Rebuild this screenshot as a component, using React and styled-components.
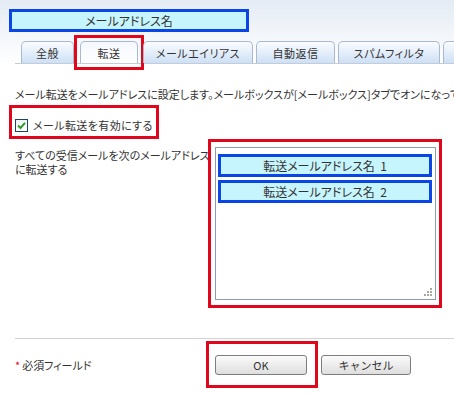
import React from "react";
import styled, { createGlobalStyle } from "styled-components";

const RED = "#e0061c";
const BLUE = "#0a45e6";
const CYAN = "#c7f5fd";

const GlobalStyle = createGlobalStyle`
  html, body {
    margin: 0;
    padding: 0;
    background: #fff;
  }
  body {
    font-family: "Noto Sans CJK JP", "Noto Sans", sans-serif;
    font-size: 11px;
    color: #333;
    font-feature-settings: "palt";
  }
`;

const Page = styled.div`
  width: 454px;
  height: 397px;
  overflow: hidden;
  background: #fff;
`;

const Header = styled.div`
  padding-top: 9px;
  background: linear-gradient(#e4ebf4, #ffffff);
`;

const NameBox = styled.div`
  margin-left: 9px;
  width: 240px;
  height: 23px;
  box-sizing: border-box;
  border: 3px solid ${BLUE};
  background: ${CYAN};
  display: flex;
  align-items: center;
  justify-content: center;
  font-size: 12px;
`;

const TabStrip = styled.div`
  display: flex;
  align-items: flex-end;
  gap: 3px;
  margin: 3px 0 0 15px;
  padding-left: 6px;
  border-bottom: 1px solid #c3ccd8;
`;

const Tab = styled.div`
  flex-shrink: 0;
  width: ${(p) => p.$w}px;
  height: 22px;
  box-sizing: border-box;
  border: 1px solid #a9b9cf;
  border-bottom: none;
  border-radius: 5px 5px 0 0;
  background: ${(p) =>
    p.$active ? "linear-gradient(#f4f8fc, #ffffff)" : "linear-gradient(#fafcff, #cde0f5)"};
  display: flex;
  align-items: center;
  justify-content: center;
  white-space: nowrap;
  letter-spacing: 0.5px;
`;

const RedFrame = styled.div`
  flex-shrink: 0;
  border: 3px solid ${RED};
  padding: ${(p) => p.$pad};
  margin: ${(p) => p.$margin || 0};
`;

const Content = styled.div`
  padding-left: 15px;
`;

const Description = styled.div`
  margin-top: 22px;
  line-height: 16px;
  white-space: nowrap;
`;

const CheckFrame = styled(RedFrame)`
  width: fit-content;
  display: flex;
  align-items: center;
  gap: 5px;
  letter-spacing: 0.4px;
`;

const CheckBox = styled.span`
  width: 13px;
  height: 13px;
  box-sizing: border-box;
  border: 1px solid #1f4466;
  background: linear-gradient(#eef2f5, #ffffff);
  display: flex;
  align-items: center;
  justify-content: center;
`;

const ForwardRow = styled.div`
  display: flex;
  align-items: flex-start;
`;

const ForwardLabel = styled.div`
  width: 193px;
  padding-top: 9px;
  line-height: 14px;
  white-space: nowrap;
`;

const AddressList = styled.div`
  position: relative;
  width: 221px;
  height: 153px;
  box-sizing: border-box;
  border: 1px solid #8c9db3;
  padding: 6px 3px 0 2px;
  display: flex;
  flex-direction: column;
  gap: 3px;
`;

const AddressItem = styled.div`
  height: 23px;
  box-sizing: border-box;
  border: 3px solid ${BLUE};
  background: ${CYAN};
  display: flex;
  align-items: center;
  justify-content: center;
  font-size: 12px;
  white-space: pre;
`;

const Grip = styled.svg`
  position: absolute;
  right: 3px;
  bottom: 3px;
`;

const Footer = styled.div`
  margin: 30px 0 0 15px;
  padding-top: 2px;
  border-top: 1px solid #d2d2d2;
  display: flex;
  align-items: center;
`;

const Required = styled.div`
  width: 191px;
  span {
    color: ${RED};
    margin-right: 2px;
  }
`;

const Button = styled.button`
  width: ${(p) => p.$w}px;
  height: 20px;
  margin: ${(p) => p.$margin || 0};
  border: 1px solid #7d7d7d;
  border-radius: 3px;
  background: linear-gradient(#fbfbfb, #dedede);
  font-family: inherit;
  font-size: 11px;
  color: #333;
  padding: 0;
  display: block;
`;

const tabs = [
  { label: "全般", w: 53 },
  { label: "転送", w: 58, active: true },
  { label: "メールエイリアス", w: 110 },
  { label: "自動返信", w: 79 },
  { label: "スパムフィルタ", w: 102 },
  { label: "", w: 60 },
];

export default function App() {
  return (
    <Page>
      <GlobalStyle />
      <Header>
        <NameBox>メールアドレス名</NameBox>
        <TabStrip>
          {tabs.map((t, i) =>
            t.active ? (
              <RedFrame key={i} $pad="3px 3px 4px 3px" $margin="0 -4px -7px -3px">
                <Tab $w={t.w} $active>
                  {t.label}
                </Tab>
              </RedFrame>
            ) : (
              <Tab key={i} $w={t.w}>
                {t.label}
              </Tab>
            )
          )}
        </TabStrip>
      </Header>

      <Content>
        <Description>
          メール転送をメールアドレスに設定します。メールボックスが[メールボックス]タブでオンになっている
        </Description>

        <CheckFrame $pad="9px 3px 3px 3px" $margin="3px 0 0 -6px">
          <CheckBox>
            <svg width="9" height="9" viewBox="0 0 9 9">
              <path d="M1 4.5 L3.5 7 L8 1.8" fill="none" stroke="#2e9a2a" strokeWidth="2" />
            </svg>
          </CheckBox>
          <span>メール転送を有効にする</span>
        </CheckFrame>

        <ForwardRow>
          <ForwardLabel>
            すべての受信メールを次のメールアドレス
            <br />
            に転送する
          </ForwardLabel>
          <RedFrame $pad="5px 3px 5px 4px">
            <AddressList>
              <AddressItem>{"転送メールアドレス名  1"}</AddressItem>
              <AddressItem>{"転送メールアドレス名  2"}</AddressItem>
              <Grip width="8" height="8" viewBox="0 0 8 8">
                <g fill="#a8a8a0">
                  <rect x="6" y="0" width="2" height="2" />
                  <rect x="3" y="3" width="2" height="2" />
                  <rect x="6" y="3" width="2" height="2" />
                  <rect x="0" y="6" width="2" height="2" />
                  <rect x="3" y="6" width="2" height="2" />
                  <rect x="6" y="6" width="2" height="2" />
                </g>
              </Grip>
            </AddressList>
          </RedFrame>
        </ForwardRow>
      </Content>

      <Footer>
        <Required>
          <span>*</span>必須フィールド
        </Required>
        <RedFrame $pad="11px 8px 10px 6px">
          <Button $w={92}>OK</Button>
        </RedFrame>
        <Button $w={90} $margin="0 0 0 3px">
          キャンセル
        </Button>
      </Footer>
    </Page>
  );
}
